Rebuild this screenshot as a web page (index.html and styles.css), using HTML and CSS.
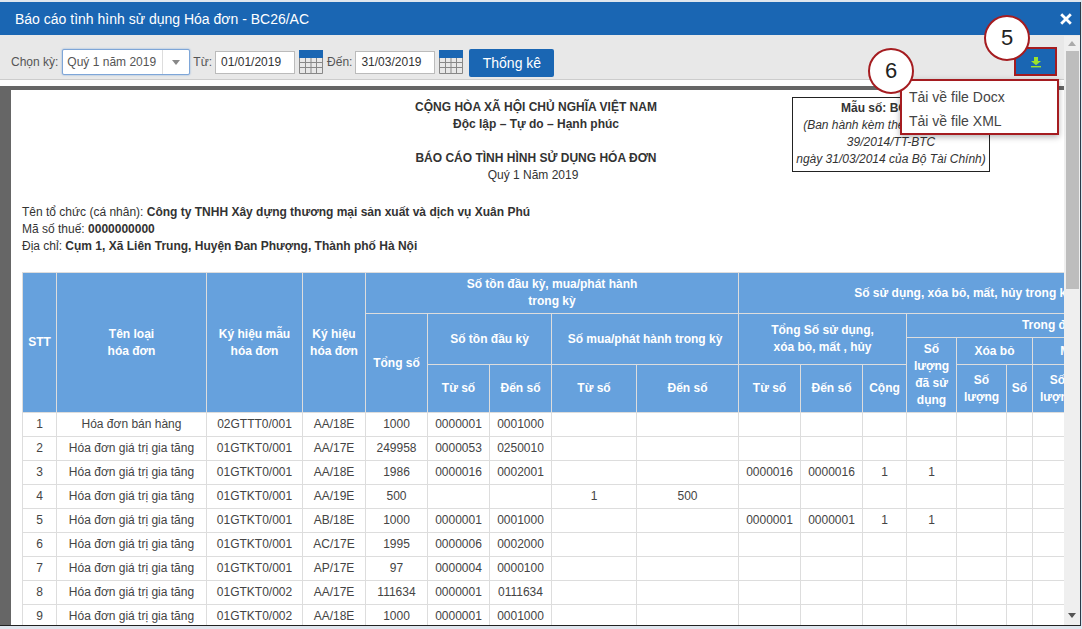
FILE: index.html
```html
<!DOCTYPE html>
<html lang="en">

<head>
    <meta charset="UTF-8">
    <title>Báo cáo tình hình sử dụng Hóa đơn</title>
    <link rel="stylesheet" href="styles.css">
</head>

<body>
    <div class="modal">
        <div class="titlebar">
            <span>Báo cáo tình hình sử dụng Hóa đơn - BC26/AC</span>
            <svg class="close" viewBox="0 0 12 12" width="12" height="12">
                <path d="M1.200 1.200l9.600 9.600M10.800 1.200l-9.600 9.600" fill="none" stroke="#fff" stroke-width="2.800" />
            </svg>
        </div>

        <div class="toolbar">
            <label>Chọn kỳ:</label>
            <div class="select"><span>Quý 1 năm 2019</span><i class="arrow"></i></div>
            <label>Từ:</label>
            <input class="date" value="01/01/2019">
            <svg class="cal" viewBox="0 0 24 24" width="24" height="24">
                <rect x="0" y="0" width="24" height="8" fill="#1a66b3" />
                <path d="M.5 8v15.500h23V8M.5 12.500h23M.5 17.500h23M6.500 8v16M12 8v16M17.500 8v16" fill="none" stroke="#888" />
            </svg>
            <label>Đến:</label>
            <input class="date" value="31/03/2019">
            <svg class="cal" viewBox="0 0 24 24" width="24" height="24">
                <rect x="0" y="0" width="24" height="8" fill="#1a66b3" />
                <path d="M.5 8v15.500h23V8M.5 12.500h23M.5 17.500h23M6.500 8v16M12 8v16M17.500 8v16" fill="none" stroke="#888" />
            </svg>
            <button class="stat-btn">Thống kê</button>
            <button class="dl-btn">
                <svg viewBox="0 0 12 12" width="12" height="12">
                    <path d="M4 1h4v4h3L6 9.200 1 5h3z" fill="#9be22d" />
                    <rect x="1" y="10" width="10" height="1.400" fill="#9be22d" />
                </svg>
            </button>
        </div>

        <div class="content">
            <div class="paper">
                <div class="report-head">
                    <div class="nation">
                        <p><b>CỘNG HÒA XÃ HỘI CHỦ NGHĨA VIỆT NAM</b></p>
                        <p><b>Độc lập – Tự do – Hạnh phúc</b></p>
                        <p class="report-title"><b>BÁO CÁO TÌNH HÌNH SỬ DỤNG HÓA ĐƠN</b></p>
                        <p class="period">Quý 1 Năm 2019</p>
                    </div>
                    <div class="form-box">
                        <p><b>Mẫu số: BC26/AC</b></p>
                        <p><i>(Ban hành kèm theo Thông tư số</i></p>
                        <p><i>39/2014/TT-BTC</i></p>
                        <p><i>ngày 31/03/2014 của Bộ Tài Chính)</i></p>
                    </div>
                </div>

                <div class="company">
                    <p>Tên tổ chức (cá nhân): <b>Công ty TNHH Xây dựng thương mại sản xuất và dịch vụ Xuân Phú</b></p>
                    <p>Mã số thuế: <b>0000000000</b></p>
                    <p>Địa chỉ: <b>Cụm 1, Xã Liên Trung, Huyện Đan Phượng, Thành phố Hà Nội</b></p>
                </div>

                <table class="report">
                    <colgroup>
                        <col class="w34">
                        <col class="w150">
                        <col class="w96">
                        <col class="w63">
                        <col class="w62">
                        <col class="w62">
                        <col class="w62">
                        <col class="w85">
                        <col class="w102">
                        <col class="w62">
                        <col class="w62">
                        <col class="w44">
                        <col class="w50">
                        <col class="w50">
                        <col class="w26">
                        <col class="w50">
                        <col class="w26">
                        <col class="w80">
                    </colgroup>
                    <thead>
                        <tr class="h41">
                            <th rowspan="4">STT</th>
                            <th rowspan="4">Tên loại<br>hóa đơn</th>
                            <th rowspan="4">Ký hiệu mẫu<br>hóa đơn</th>
                            <th rowspan="4">Ký hiệu<br>hóa đơn</th>
                            <th colspan="5">Số tồn đầu kỳ, mua/phát hành<br>trong kỳ</th>
                            <th colspan="9">Số sử dụng, xóa bỏ, mất, hủy trong kỳ</th>
                        </tr>
                        <tr class="h24">
                            <th rowspan="3">Tổng số</th>
                            <th colspan="2" rowspan="2">Số tồn đầu kỳ</th>
                            <th colspan="2" rowspan="2">Số mua/phát hành trong kỳ</th>
                            <th colspan="3" rowspan="2">Tổng Số sử dụng,<br>xóa bỏ, mất , hủy</th>
                            <th colspan="6">Trong đó</th>
                        </tr>
                        <tr class="h27">
                            <th rowspan="2">Số<br>lượng<br>đã sử<br>dụng</th>
                            <th colspan="2">Xóa bỏ</th>
                            <th colspan="2">Mất</th>
                            <th rowspan="2"></th>
                        </tr>
                        <tr class="h48">
                            <th>Từ số</th>
                            <th>Đến số</th>
                            <th>Từ số</th>
                            <th>Đến số</th>
                            <th>Từ số</th>
                            <th>Đến số</th>
                            <th>Cộng</th>
                            <th>Số<br>lượng</th>
                            <th>Số</th>
                            <th>Số<br>lượng</th>
                            <th>Số</th>
                        </tr>
                    </thead>
                    <tbody>
                        <tr><td>1</td><td>Hóa đơn bán hàng</td><td>02GTTT0/001</td><td>AA/18E</td><td>1000</td><td>0000001</td><td>0001000</td><td></td><td></td><td></td><td></td><td></td><td></td><td></td><td></td><td></td><td></td><td></td></tr>
                        <tr><td>2</td><td>Hóa đơn giá trị gia tăng</td><td>01GTKT0/001</td><td>AA/17E</td><td>249958</td><td>0000053</td><td>0250010</td><td></td><td></td><td></td><td></td><td></td><td></td><td></td><td></td><td></td><td></td><td></td></tr>
                        <tr><td>3</td><td>Hóa đơn giá trị gia tăng</td><td>01GTKT0/001</td><td>AA/18E</td><td>1986</td><td>0000016</td><td>0002001</td><td></td><td></td><td>0000016</td><td>0000016</td><td>1</td><td>1</td><td></td><td></td><td></td><td></td><td></td></tr>
                        <tr><td>4</td><td>Hóa đơn giá trị gia tăng</td><td>01GTKT0/001</td><td>AA/19E</td><td>500</td><td></td><td></td><td>1</td><td>500</td><td></td><td></td><td></td><td></td><td></td><td></td><td></td><td></td><td></td></tr>
                        <tr><td>5</td><td>Hóa đơn giá trị gia tăng</td><td>01GTKT0/001</td><td>AB/18E</td><td>1000</td><td>0000001</td><td>0001000</td><td></td><td></td><td>0000001</td><td>0000001</td><td>1</td><td>1</td><td></td><td></td><td></td><td></td><td></td></tr>
                        <tr><td>6</td><td>Hóa đơn giá trị gia tăng</td><td>01GTKT0/001</td><td>AC/17E</td><td>1995</td><td>0000006</td><td>0002000</td><td></td><td></td><td></td><td></td><td></td><td></td><td></td><td></td><td></td><td></td><td></td></tr>
                        <tr><td>7</td><td>Hóa đơn giá trị gia tăng</td><td>01GTKT0/001</td><td>AP/17E</td><td>97</td><td>0000004</td><td>0000100</td><td></td><td></td><td></td><td></td><td></td><td></td><td></td><td></td><td></td><td></td><td></td></tr>
                        <tr><td>8</td><td>Hóa đơn giá trị gia tăng</td><td>01GTKT0/002</td><td>AA/17E</td><td>111634</td><td>0000001</td><td>0111634</td><td></td><td></td><td></td><td></td><td></td><td></td><td></td><td></td><td></td><td></td><td></td></tr>
                        <tr><td>9</td><td>Hóa đơn giá trị gia tăng</td><td>01GTKT0/002</td><td>AA/18E</td><td>1000</td><td>0000001</td><td>0001000</td><td></td><td></td><td></td><td></td><td></td><td></td><td></td><td></td><td></td><td></td><td></td></tr>
                    </tbody>
                </table>
            </div>
            <div class="scrollbar">
                <i class="sb-up"></i>
                <div class="sb-thumb"></div>
                <i class="sb-down"></i>
            </div>
        </div>

        <!-- annotation overlays -->
        <div class="dl-menu">
            <div>Tải về file Docx</div>
            <div>Tải về file XML</div>
        </div>
        <div class="step step-5">5</div>
        <div class="step step-6">6</div>
    </div>
</body>

</html>
```

FILE: styles.css
```css
* {
    box-sizing: border-box;
}

html,
body {
    margin: 0;
    height: 100%;
    overflow: hidden;
    background: #dfe6ee;
    font-family: "Liberation Sans", Arial, sans-serif;
    font-size: 12px;
    color: #333;
}

p {
    margin: 0;
}

.modal {
    position: relative;
    height: 624px;
    margin-top: 2px;
    margin-right: 1px;
    display: flex;
    flex-direction: column;
    background: #fff;
    border-right: 1px solid #2b3a4a;
    border-bottom: 1px solid #222;
    overflow: hidden;
}

.titlebar {
    height: 33px;
    flex: none;
    display: flex;
    justify-content: space-between;
    align-items: center;
    padding: 0 8px 0 15px;
    background: #1a66b3;
    color: #fff;
    font-size: 14px;
}

.toolbar {
    height: 45px;
    flex: none;
    display: flex;
    align-items: center;
    padding: 9px 23px 0 11px;
    background: #e8e8e8;
    border-bottom: 1px solid #ccc;
    color: #555;
}

.select {
    width: 128px;
    height: 26px;
    margin: 1px 3px 0 4px;
    display: flex;
    align-items: center;
    justify-content: space-between;
    padding-left: 4px;
    background: #fff;
    border: 1px solid #7ea6d8;
    border-radius: 2px;
    box-shadow: 0 0 2px #7ea6d8;
}

.arrow {
    width: 27px;
    height: 100%;
    position: relative;
    border-left: 1px solid #ddd;
}

.arrow::after {
    content: "";
    position: absolute;
    left: 9px;
    top: 10px;
    border: 4px solid transparent;
    border-top: 5px solid #888;
    border-bottom: 0;
}

.date {
    width: 80px;
    height: 23px;
    margin: 1px 0 0 3px;
    padding: 0 5px;
    border: 1px solid #bbb;
    font: 12px "Liberation Sans", Arial, sans-serif;
    color: #333;
}

.cal {
    margin: 1px 4px 0 4px;
    flex: none;
}

button {
    border: none;
    cursor: pointer;
}

.stat-btn {
    width: 85px;
    height: 28px;
    margin: 3px 0 0 2px;
    background: #1a66b3;
    color: #fff;
    border-radius: 2px;
    font: 14px "Liberation Sans", Arial, sans-serif;
}

.dl-btn {
    width: 43px;
    height: 29px;
    margin-left: auto;
    padding: 0;
    display: flex;
    align-items: center;
    justify-content: center;
    background: #1a66b3;
    border: 2px solid #a51c20;
}

.content {
    flex: 1;
    min-height: 0;
    display: flex;
    padding-top: 6px;
    background: #fff;
}

.paper {
    flex: 1;
    min-width: 0;
    overflow: hidden;
    border-top: 4px solid #666;
    border-left: 11px solid #666;
    padding: 9px 0 0 11px;
    background: #fff;
}

.report-head {
    position: relative;
    text-align: center;
    height: 105px;
}

.nation {
    width: 1050px;
    margin-left: -11px;
    line-height: 17px;
    white-space: nowrap;
}

.report-title {
    margin-top: 17px;
}

.period {
    padding-right: 6px;
}

.form-box {
    position: absolute;
    left: 770px;
    top: -2px;
    width: 198px;
    height: 75px;
    padding-top: 2px;
    border: 1px solid #222;
    background: #fff;
    line-height: 17px;
    white-space: nowrap;
}

.company {
    line-height: 17px;
    height: 68px;
    white-space: nowrap;
}

.report {
    table-layout: fixed;
    border-collapse: collapse;
    width: 1166px;
    font-size: 12px;
}

.w26 { width: 26px; }
.w34 { width: 34px; }
.w44 { width: 44px; }
.w50 { width: 50px; }
.w62 { width: 62px; }
.w63 { width: 63px; }
.w80 { width: 80px; }
.w85 { width: 85px; }
.w96 { width: 96px; }
.w102 { width: 102px; }
.w150 { width: 150px; }

.report th,
.report td {
    border: 1px solid #ddd;
    padding: 0 1px;
    text-align: center;
    overflow: hidden;
    white-space: nowrap;
}

.report th {
    background: #66a1dd;
    color: #fff;
    line-height: 17px;
}

.report td {
    height: 24px;
    padding-bottom: 2px;
    color: #444;
}

.h41 {
    height: 41px;
}

.h24 {
    height: 24px;
}

.h27 {
    height: 27px;
}

.h48 {
    height: 48px;
}

.scrollbar {
    width: 16px;
    flex: none;
    margin-top: -50px;
    position: relative;
    background: #efefef;
    z-index: 1;
}

.sb-thumb {
    position: absolute;
    top: 15px;
    left: 2px;
    right: 1px;
    height: 238px;
    background: #bdbdbd;
}

.sb-up,
.sb-down {
    position: absolute;
    left: 4px;
    border: 4px solid transparent;
}

.sb-up {
    top: 5px;
    border-top: 0;
    border-bottom: 5px solid #aaa;
}

.sb-down {
    bottom: 7px;
    border-bottom: 0;
    border-top: 5px solid #555;
}

.dl-menu {
    position: absolute;
    left: 900px;
    top: 77px;
    width: 159px;
    height: 56px;
    padding: 4px 0 0 7px;
    background: #fff;
    border: 2px solid #a51c20;
    box-shadow: 0 2px 6px rgba(0, 0, 0, 0.3);
    font-size: 14px;
    line-height: 24px;
    color: #444;
    z-index: 2;
}

.step {
    position: absolute;
    width: 46px;
    height: 46px;
    display: flex;
    align-items: center;
    justify-content: center;
    background: #fff;
    border: 2px solid #a51c20;
    border-radius: 50%;
    font-size: 22px;
    color: #222;
    z-index: 3;
}

.step-5 {
    left: 984px;
    top: 13px;
}

.step-6 {
    left: 868px;
    top: 46px;
}
```
